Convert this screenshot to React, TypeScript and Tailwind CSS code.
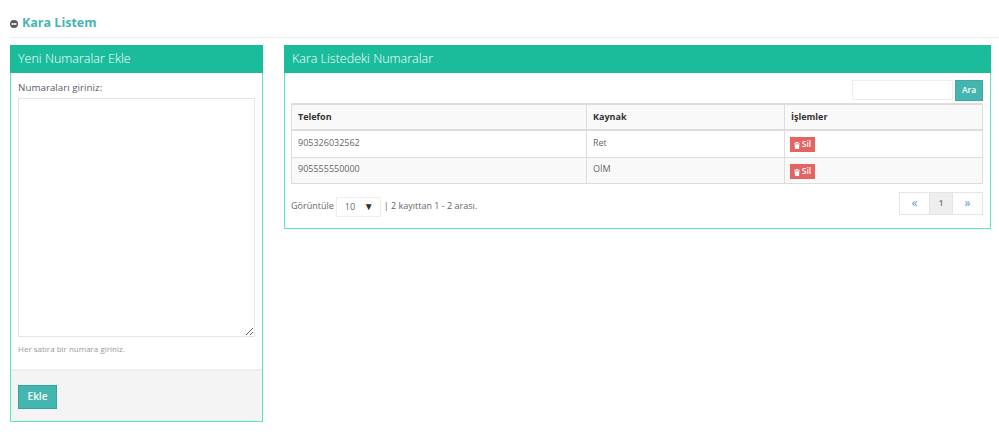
const rows = [
    { phone: '905326032562', source: 'Ret', striped: false },
    { phone: '905555550000', source: 'OİM', striped: true },
]

export default function App() {
    return (
        <div className="w-[999px] h-[435px] overflow-hidden bg-white font-['Open_Sans',sans-serif] text-[#555555]">
            {/* Page title */}
            <div className="h-[38px] ml-[10px] pt-[8px] border-b border-[#eeeeee] flex items-center gap-[4px]">
                <svg width="8" height="8" viewBox="0 0 8 8" className="mt-[2px]">
                    <circle cx="4" cy="4" r="4" fill="#5a5a5a" />
                    <rect x="1.5" y="3.2" width="5" height="1.6" fill="#ffffff" />
                </svg>
                <h1 className="text-[12.5px] leading-[20px] font-bold text-[#45b6af]">Kara Listem</h1>
            </div>

            <div className="flex gap-[21px] pl-[10px] pt-[7px]">
                {/* Add numbers */}
                <div className="w-[253px] h-[377px] border border-[#5ce2c8] flex flex-col">
                    <div className="h-[27px] -mx-px -mt-px box-content bg-[#1abc9c] text-white text-[12.5px] font-light leading-[25px] pl-[8px] pt-px">
                        Yeni Numaralar Ekle
                    </div>
                    <div className="flex-1 px-[7px] pt-[7px]">
                        <label className="block text-[9.8px] leading-[16px] text-[#5b5b6b]">Numaraları giriniz:</label>
                        <textarea className="block mt-[2px] w-[237px] h-[239px] border border-[#e5e5e5] outline-none resize-y" />
                        <p className="mt-[6px] text-[8px] leading-[12px] text-[#999999]">Her satıra bir numara giriniz.</p>
                    </div>
                    <div className="h-[52px] bg-[#f4f4f4] border-t-2 border-[#eeeeee] px-[7px] pt-[11px]">
                        <button className="w-[39px] h-[24px] bg-[#45b6af] border border-[#35a29b] outline outline-1 outline-[#e8f5f4] text-white text-[10px] font-semibold">
                            Ekle
                        </button>
                    </div>
                </div>

                {/* Blacklist table */}
                <div className="w-[707px] h-[184px] border border-[#5ce2c8] flex flex-col">
                    <div className="h-[27px] -mx-px -mt-px box-content bg-[#1abc9c] text-white text-[12.5px] font-light leading-[25px] pl-[8px] pt-px">
                        Kara Listedeki Numaralar
                    </div>
                    <div className="px-[6px]">
                        <div className="flex justify-end pt-[7px] pr-px h-[30px] gap-[2px]">
                            <input className="w-[101px] h-[20px] border border-[#eeeeee] outline-none" />
                            <button className="w-[28px] h-[21px] bg-[#45b6af] border border-[#3ea8a1] text-white text-[8.5px] font-semibold">
                                Ara
                            </button>
                        </div>
                        <table className="w-[692px] table-fixed border-collapse border border-[#dddddd] text-[9px]">
                            <thead>
                                <tr className="h-[26px] bg-[#f9f9f9] border-t-2 border-[#dddddd]">
                                    <th className="w-[295px] border border-[#dddddd] border-b-2 px-[6px] text-left font-bold text-[#333333]">Telefon</th>
                                    <th className="w-[198px] border border-[#dddddd] border-b-2 px-[6px] text-left font-bold text-[#333333]">Kaynak</th>
                                    <th className="border border-[#dddddd] border-b-2 px-[6px] text-left font-bold text-[#333333]">İşlemler</th>
                                </tr>
                            </thead>
                            <tbody>
                                {rows.map(row => (
                                    <tr key={row.phone} className={`${row.striped ? 'h-[26px] bg-[#f9f9f9]' : 'h-[27px] bg-white'}`}>
                                        <td className="border border-[#dddddd] px-[6px] pb-[3px] text-[#666666]">{row.phone}</td>
                                        <td className="border border-[#dddddd] px-[6px] pb-[3px] text-[#666666]">{row.source}</td>
                                        <td className="border border-[#dddddd] px-[5px]">
                                            <span className="inline-flex items-center justify-center gap-[2px] w-[25px] h-[15px] mt-[2px] bg-[#e46464] text-white text-[8.5px] font-semibold align-middle">
                                                <svg width="6" height="7" viewBox="0 0 7 8" className="mt-[2px]">
                                                    <path d="M2.4 0h2.2l.4.8H7v1H0v-1h2zM.7 2.4h5.6L5.9 8H1.1z" fill="#ffffff" />
                                                </svg>
                                                Sil
                                            </span>
                                        </td>
                                    </tr>
                                ))}
                            </tbody>
                        </table>
                        <div className="flex justify-between items-start pt-[8px] pr-px">
                            <div className="flex items-center h-[20px] mt-[5px] text-[9px] text-[#666666]">
                                <span className="pb-[2px]">Görüntüle</span>
                                <div className="ml-[2px] w-[45px] h-[20px] border border-[#eeeeee] flex items-center justify-between pl-[8px] pr-[6px]">
                                    <span>10</span>
                                    <span className="text-[10px] text-[#333333]">▼</span>
                                </div>
                                <span className="ml-[3px] pb-[2px]">| 2 kayıttan 1 - 2 arası.</span>
                            </div>
                            <div className="flex h-[23px] border border-[#e5e5e5] text-[12px] text-[#6f94c8]">
                                <div className="w-[29px] flex items-center justify-center">«</div>
                                <div className="w-[24px] flex items-center justify-center bg-[#eeeeee] text-[#777777] border-x border-[#e5e5e5] text-[9px] font-semibold">1</div>
                                <div className="w-[29px] flex items-center justify-center">»</div>
                            </div>
                        </div>
                    </div>
                </div>
            </div>
        </div>
    )
}
